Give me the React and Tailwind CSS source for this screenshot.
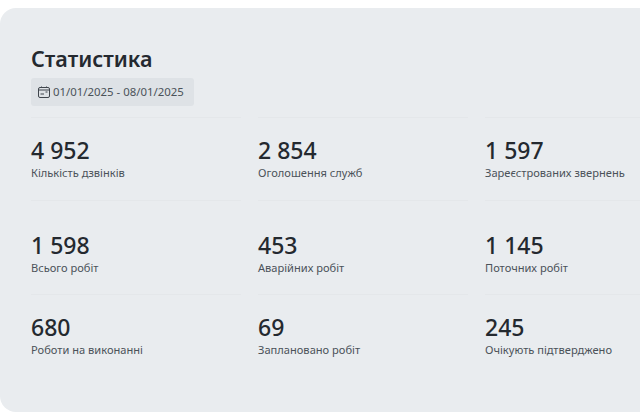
import React from "react";

const ROWS = [
  {
    height: "h-[83px]",
    padding: "pt-[18px]",
    stats: [
      { value: "4 952", label: "Кількість дзвінків" },
      { value: "2 854", label: "Оголошення служб" },
      { value: "1 597", label: "Зареєстрованих звернень" },
    ],
  },
  {
    height: "h-[94px]",
    padding: "pt-[30px]",
    stats: [
      { value: "1 598", label: "Всього робіт" },
      { value: "453", label: "Аварійних робіт" },
      { value: "1 145", label: "Поточних робіт" },
    ],
  },
  {
    height: "h-[84px]",
    padding: "pt-[18px]",
    stats: [
      { value: "680", label: "Роботи на виконанні" },
      { value: "69", label: "Заплановано робіт" },
      { value: "245", label: "Очікують підтверджено" },
    ],
  },
];

function CalendarIcon() {
  return (
    <svg width="12" height="12" viewBox="0 0 12 12" fill="none" stroke="#3f454c" strokeWidth="1" className="shrink-0">
      <rect x="0.5" y="1.500" width="11" height="10" rx="1.500" />
      <path d="M0.500 4h11M3.500 0.500v1.500M8.500 0.500v1.500M2.500 8h3.500M7.500 6h2" />
    </svg>
  );
}

function Stat({ value, label, padding }) {
  return (
    <div className={`w-[210px] shrink-0 border-t border-[#e4e7ea] ${padding}`}>
      <div className="text-[23px] leading-[28px] font-medium text-[#24292f]">{value}</div>
      <div className="mt-[1px] text-[11.1px] leading-[15px] text-[#4b5259] whitespace-nowrap">{label}</div>
    </div>
  );
}

export default function App() {
  return (
    <div className="h-[420px] w-[640px] overflow-hidden bg-white pt-2 font-['Noto_Sans',sans-serif]">
      <div className="h-[404px] w-[700px] rounded-2xl bg-[#e9ecef] pl-[31px] pt-[36px]">
        <h2 className="text-[21.5px] leading-[30px] font-semibold text-[#24292f]">Статистика</h2>
        <div className="mt-[4px] flex h-[28px] w-[163px] items-center gap-[3px] rounded-[3px] bg-[#dee2e6] pl-[7px] text-[11.4px] text-[#4b5259] whitespace-nowrap">
          <CalendarIcon />
          <span>01/01/2025 - 08/01/2025</span>
        </div>
        <div className="mt-[11px]">
          {ROWS.map((row) => (
            <div key={row.stats[0].label} className={`flex gap-[17px] ${row.height}`}>
              {row.stats.map((stat) => (
                <Stat key={stat.label} value={stat.value} label={stat.label} padding={row.padding} />
              ))}
            </div>
          ))}
        </div>
      </div>
    </div>
  );
}
